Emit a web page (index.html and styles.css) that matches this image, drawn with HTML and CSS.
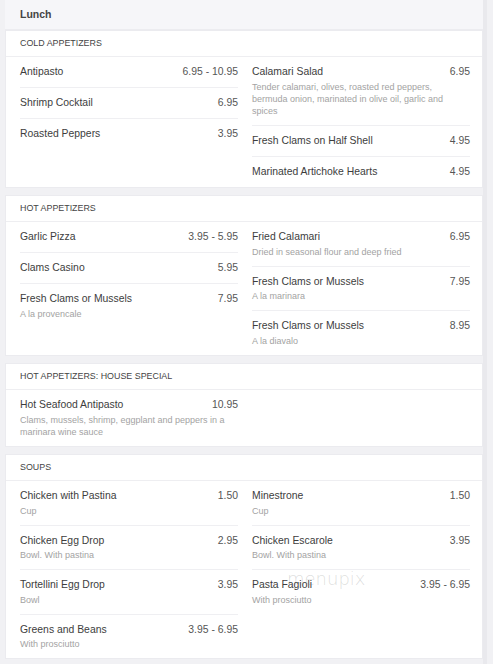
FILE: index.html
```html
<!DOCTYPE html>
<html>
<head>
<meta charset="utf-8">
<link rel="stylesheet" href="styles.css">
</head>
<body>
<div class="page">
  <div class="menu-title">Lunch</div>

  <section class="card">
    <div class="card-head">COLD APPETIZERS</div>
    <div class="cols">
      <div class="col">
        <div class="item"><div class="row"><span class="name">Antipasto</span><span class="price">6.95 - 10.95</span></div></div>
        <div class="item"><div class="row"><span class="name">Shrimp Cocktail</span><span class="price">6.95</span></div></div>
        <div class="item"><div class="row"><span class="name">Roasted Peppers</span><span class="price">3.95</span></div></div>
      </div>
      <div class="col">
        <div class="item"><div class="row"><span class="name">Calamari Salad</span><span class="price">6.95</span></div><div class="desc">Tender calamari, olives, roasted red peppers, bermuda onion, marinated in olive oil, garlic and spices</div></div>
        <div class="item"><div class="row"><span class="name">Fresh Clams on Half Shell</span><span class="price">4.95</span></div></div>
        <div class="item"><div class="row"><span class="name">Marinated Artichoke Hearts</span><span class="price">4.95</span></div></div>
      </div>
    </div>
  </section>

  <section class="card">
    <div class="card-head">HOT APPETIZERS</div>
    <div class="cols">
      <div class="col">
        <div class="item"><div class="row"><span class="name">Garlic Pizza</span><span class="price">3.95 - 5.95</span></div></div>
        <div class="item"><div class="row"><span class="name">Clams Casino</span><span class="price">5.95</span></div></div>
        <div class="item"><div class="row"><span class="name">Fresh Clams or Mussels</span><span class="price">7.95</span></div><div class="desc">A la provencale</div></div>
      </div>
      <div class="col">
        <div class="item"><div class="row"><span class="name">Fried Calamari</span><span class="price">6.95</span></div><div class="desc">Dried in seasonal flour and deep fried</div></div>
        <div class="item"><div class="row"><span class="name">Fresh Clams or Mussels</span><span class="price">7.95</span></div><div class="desc">A la marinara</div></div>
        <div class="item"><div class="row"><span class="name">Fresh Clams or Mussels</span><span class="price">8.95</span></div><div class="desc">A la diavalo</div></div>
      </div>
    </div>
  </section>

  <section class="card">
    <div class="card-head">HOT APPETIZERS: HOUSE SPECIAL</div>
    <div class="cols">
      <div class="col">
        <div class="item"><div class="row"><span class="name">Hot Seafood Antipasto</span><span class="price">10.95</span></div><div class="desc">Clams, mussels, shrimp, eggplant and peppers in a marinara wine sauce</div></div>
      </div>
      <div class="col"></div>
    </div>
  </section>

  <section class="card">
    <div class="card-head">SOUPS</div>
    <div class="cols">
      <div class="col">
        <div class="item"><div class="row"><span class="name">Chicken with Pastina</span><span class="price">1.50</span></div><div class="desc">Cup</div></div>
        <div class="item"><div class="row"><span class="name">Chicken Egg Drop</span><span class="price">2.95</span></div><div class="desc">Bowl. With pastina</div></div>
        <div class="item"><div class="row"><span class="name">Tortellini Egg Drop</span><span class="price">3.95</span></div><div class="desc">Bowl</div></div>
        <div class="item"><div class="row"><span class="name">Greens and Beans</span><span class="price">3.95 - 6.95</span></div><div class="desc">With prosciutto</div></div>
      </div>
      <div class="col">
        <div class="item"><div class="row"><span class="name">Minestrone</span><span class="price">1.50</span></div><div class="desc">Cup</div></div>
        <div class="item"><div class="row"><span class="name">Chicken Escarole</span><span class="price">3.95</span></div><div class="desc">Bowl. With pastina</div></div>
        <div class="item"><div class="row"><span class="name">Pasta Fagioli</span><span class="price">3.95 - 6.95</span></div><div class="desc">With prosciutto</div></div>
      </div>
    </div>
  </section>

  <div class="watermark">menupix</div>
</div>
</body>
</html>
```

FILE: styles.css
```css
html, body {
  margin: 0;
  padding: 0;
}

body {
  background: #f1f1f4;
  font-family: "Liberation Sans", Arial, sans-serif;
  color: #444;
  overflow: hidden;
}

.page {
  position: relative;
  width: 482px;
  margin-left: 5px;
  border-right: 4px solid #e9e9ed;
  min-height: 664px;
  box-sizing: border-box;
}

.menu-title {
  height: 29px;
  line-height: 29px;
  padding-left: 15px;
  font-size: 10.5px;
  font-weight: 700;
  color: #444;
  background: #f6f6f9;
  border-bottom: 1px solid #ececf0;
}

.card {
  background: #fff;
  border: 1px solid #ebebef;
  margin-bottom: 7.5px;
}

.card-head {
  height: 25px;
  line-height: 25px;
  padding-left: 14px;
  font-size: 8.9px;
  color: #444;
  border-bottom: 1px solid #eeeef1;
}

.cols {
  display: grid;
  grid-template-columns: 218px 218px;
  column-gap: 14px;
  padding: 0 12px 0 14px;
}

.col {
  display: flex;
  flex-direction: column;
}

.item {
  padding: 8px 0;
  border-bottom: 1px solid #efeff2;
}

.item:last-child {
  border-bottom: none;
}

.row {
  display: flex;
  justify-content: space-between;
  align-items: baseline;
  line-height: 14px;
}

.name {
  font-size: 10.4px;
  color: #3d3d3d;
}

.price {
  font-size: 10.4px;
  color: #555;
  white-space: nowrap;
}

.desc {
  margin-top: 1.5px;
  font-size: 9px;
  line-height: 12px;
  color: #a3a3a3;
}

.watermark {
  position: absolute;
  left: 282px;
  top: 570px;
  font-family: "DejaVu Sans", sans-serif;
  font-weight: 200;
  font-size: 18px;
  line-height: 18px;
  color: rgba(120, 120, 120, 0.25);
  pointer-events: none;
}
```
